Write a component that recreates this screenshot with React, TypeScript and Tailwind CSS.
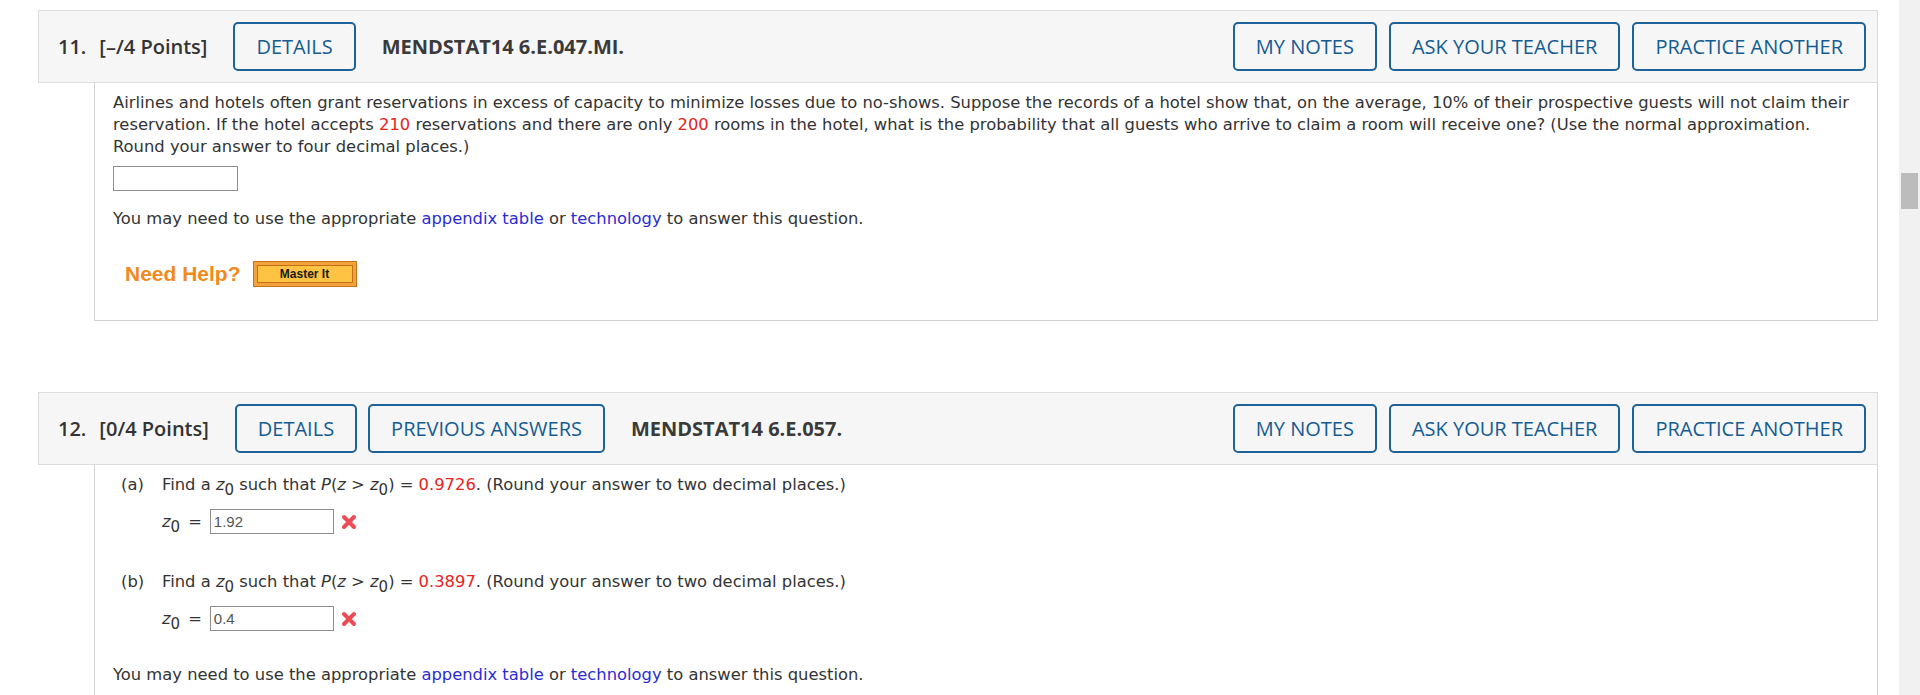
const headFont = { fontFamily: '"Open Sans", "Liberation Sans", sans-serif' };

function HeadButton({ label }: { label: string }) {
  return (
    <button className="h-[49px] rounded-[5px] border-2 border-[#1d6298] bg-transparent px-[21px] text-[20px] text-[#145c92]">
      {label}
    </button>
  );
}

function QuestionHeader({
  num,
  points,
  buttons,
  title,
}: {
  num: string;
  points: string;
  buttons: string[];
  title: string;
}) {
  return (
    <div
      className="flex h-[73px] items-center border border-[#dcdcdc] bg-[#f6f6f6] pl-[19px] pr-[11px]"
      style={headFont}
    >
      <span className="text-[20px] font-semibold text-[#333]">{num}</span>
      <span className="ml-[13px] text-[20px] font-semibold text-[#333]">{points}</span>
      <div className="mx-[26px] flex gap-[11px]">
        {buttons.map((b) => (
          <HeadButton key={b} label={b} />
        ))}
      </div>
      <span className="text-[20px] font-bold text-[#3a3a3a]">{title}</span>
      <div className="ml-auto flex gap-[12px]">
        <HeadButton label="MY NOTES" />
        <HeadButton label="ASK YOUR TEACHER" />
        <HeadButton label="PRACTICE ANOTHER" />
      </div>
    </div>
  );
}

function Red({ children }: { children: React.ReactNode }) {
  return <span className="text-[#e8231b]">{children}</span>;
}

function Link({ children }: { children: React.ReactNode }) {
  return <span className="text-[#2b2bd6]">{children}</span>;
}

function MayNeed() {
  return (
    <p>
      You may need to use the appropriate <Link>appendix table</Link> or <Link>technology</Link> to answer this question.
    </p>
  );
}

function WrongMark() {
  return (
    <svg width="16" height="16" viewBox="0 0 16 16" className="ml-[7px]">
      <path d="M3 3 L13 13 M13 3 L3 13" stroke="#ec4c56" strokeWidth="4" strokeLinecap="round" />
    </svg>
  );
}

function Z0() {
  return (
    <span>
      <i>z</i>
      <span className="relative top-[5px] text-[15px]">0</span>
    </span>
  );
}

function AnswerRow({ value, top }: { value: string; top: string }) {
  return (
    <div className={`${top} flex h-[25px] items-center pl-[49px]`}>
      <Z0 />
      <span className="ml-[8px] mr-[8px]">=</span>
      <div
        className="flex h-[25px] w-[124px] items-center border border-[#8d8d8d] pl-[3px] text-[15px] text-[#555]"
        style={{ fontFamily: '"Liberation Sans", Arial, sans-serif' }}
      >
        {value}
      </div>
      <WrongMark />
    </div>
  );
}

export default function App() {
  return (
    <div className="flex h-[695px] overflow-hidden bg-white">
      <div
        className="flex-1 pl-[38px] pr-[21px] pt-[10px] text-[16.35px] leading-[22px] text-[#333]"
        style={{ fontFamily: '"DejaVu Sans", Verdana, sans-serif' }}
      >
        {/* Question 11 */}
        <QuestionHeader num="11." points="[–/4 Points]" buttons={["DETAILS"]} title="MENDSTAT14 6.E.047.MI." />
        <div className="ml-[56px] border-x border-b border-[#d2d2d2] pb-[33px] pl-[18px] pr-[12px] pt-[9px]">
          <p>
            Airlines and hotels often grant reservations in excess of capacity to minimize losses due to no-shows. Suppose the records of a hotel show that, on the average, 10% of their prospective guests will not claim their
            <br />
            reservation. If the hotel accepts <Red>210</Red> reservations and there are only <Red>200</Red> rooms in the hotel, what is the probability that all guests who arrive to claim a room will receive one? (Use the normal approximation.
            <br />
            Round your answer to four decimal places.)
          </p>
          <div className="mt-[8px] h-[25px] w-[125px] border border-[#8d8d8d]" />
          <div className="mt-[17px]">
            <MayNeed />
          </div>
          <div className="mt-[31px] flex items-center pl-[12px]">
            <span
              className="text-[21px] font-bold text-[#ef8a1d]"
              style={{ fontFamily: '"Liberation Sans", Arial, sans-serif' }}
            >
              Need Help?
            </span>
            <div className="ml-[12px] h-[26px] w-[104px] border border-[#c9731b] bg-[#f3a23b] p-[3px]">
              <div
                className="flex h-full items-center justify-center border border-[#c47019] bg-[#ffc343] text-[12px] font-bold leading-none text-[#1a1a1a]"
                style={{ fontFamily: '"Liberation Sans", Arial, sans-serif' }}
              >
                Master It
              </div>
            </div>
          </div>
        </div>

        {/* Question 12 */}
        <div className="mt-[71px]">
          <QuestionHeader
            num="12."
            points="[0/4 Points]"
            buttons={["DETAILS", "PREVIOUS ANSWERS"]}
            title="MENDSTAT14 6.E.057."
          />
          <div className="ml-[56px] h-[300px] border-x border-[#d2d2d2] pl-[18px] pr-[12px] pt-[9px]">
            <div className="flex">
              <span className="w-[49px] pl-[8px]">(a)</span>
              <span>
                Find a <Z0 /> such that <i>P</i>(<i>z</i> &gt; <Z0 />) = <Red>0.9726</Red>. (Round your answer to two decimal places.)
              </span>
            </div>
            <AnswerRow value="1.92" top="mt-[13px]" />
            <div className="mt-[37px] flex">
              <span className="w-[49px] pl-[8px]">(b)</span>
              <span>
                Find a <Z0 /> such that <i>P</i>(<i>z</i> &gt; <Z0 />) = <Red>0.3897</Red>. (Round your answer to two decimal places.)
              </span>
            </div>
            <AnswerRow value="0.4" top="mt-[13px]" />
            <div className="mt-[33px]">
              <MayNeed />
            </div>
          </div>
        </div>
      </div>

      {/* scrollbar */}
      <div className="w-[21px] shrink-0 bg-[#f1f1f1] px-[2px] pt-[173px]">
        <div className="h-[36px] bg-[#bcbcbc]" />
      </div>
    </div>
  );
}
